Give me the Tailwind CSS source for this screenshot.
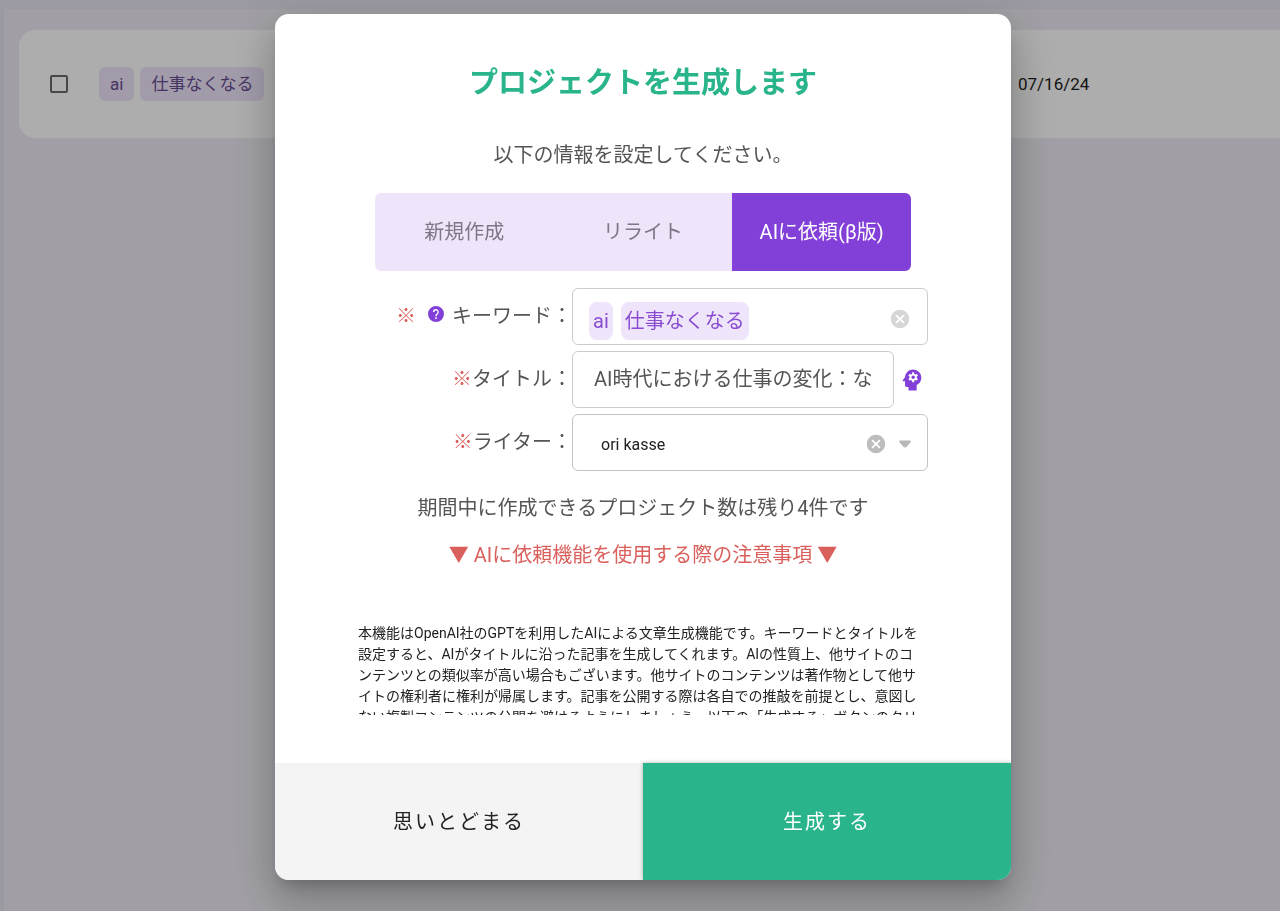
<!DOCTYPE html>
<html lang="ja">
<head>
  <meta charset="UTF-8">
  <meta name="viewport" content="width=device-width, initial-scale=1.0">
  <title>プロジェクトを生成します</title>
  <script src="https://cdn.jsdelivr.net/npm/@tailwindcss/browser@4"></script>
</head>
<body class="min-h-screen bg-[#e5e3ef] font-['Roboto','Noto_Sans_CJK_JP',sans-serif]">
  <!-- Project list -->
  <main class="min-h-screen pt-[9px] pl-1 overflow-hidden">
    <div class="min-h-screen bg-[#edebf3] pt-[21px] pl-[15px]">
      <div class="bg-white rounded-l-2xl">
        <table class="w-full text-[17px] leading-[26px] text-[#222]">
          <tbody>
            <tr class="h-[108px]">
              <td class="w-20 pl-[31px]">
                <input type="checkbox" aria-label="プロジェクトを選択" class="block appearance-none size-[18px] border-2 border-[#6b6b6b] rounded-xs">
              </td>
              <td>
                <div class="flex gap-1.5">
                  <span class="rounded-md bg-[#efe5fb] text-[#664c92] px-[11px] py-1">ai</span>
                  <span class="rounded-md bg-[#efe5fb] text-[#664c92] px-[11px] py-1">仕事なくなる</span>
                </div>
              </td>
              <td class="w-[262px]">07/16/24</td>
            </tr>
          </tbody>
        </table>
      </div>
    </div>
  </main>

  <!-- Modal -->
  <div class="fixed inset-0 bg-black/32 flex items-start justify-center pt-3.5 pl-1.5">
    <div role="dialog" aria-modal="true" aria-labelledby="dialogTitle" class="w-full max-w-[736px] bg-white rounded-[14px] overflow-hidden shadow-[0_11px_15px_-7px_rgba(0,0,0,0.2),0_24px_38px_3px_rgba(0,0,0,0.14),0_9px_46px_8px_rgba(0,0,0,0.12)]">
      <div class="px-[83px] pt-[49px] pb-12 text-xl leading-[30px] text-[#555]">
        <h1 id="dialogTitle" class="text-center text-[29px] leading-10 font-bold text-[#29b48c]">プロジェクトを生成します</h1>
        <p class="mt-[37px] text-center">以下の情報を設定してください。</p>

        <div class="mt-[23px] mx-[17px] grid grid-cols-3 h-[78px] rounded-md overflow-hidden bg-[#efe5fb] text-[#7d7786]">
          <button type="button">新規作成</button>
          <button type="button">リライト</button>
          <button type="button" class="bg-[#8340d9] text-white">AIに依頼(β版)</button>
        </div>

        <div class="mt-[17px] flex flex-col gap-1.5">
          <div class="flex">
            <div class="w-[214px] shrink-0 h-14 flex items-center justify-end">
              <span class="text-[#d9605c]">※</span>
              <button type="button" aria-label="ヘルプ" class="ml-2.5 mr-1.5 pb-1">
                <svg class="block size-5 text-[#8340d9]" viewBox="0 0 24 24" fill="currentColor"><path fill-rule="evenodd" d="M12,2.4A9.6,9.6 0 1,0 12,21.6A9.6,9.6 0 1,0 12,2.4ZM12,6A3.7,3.7 0 0,0 8.3,9.6H10.1A1.9,1.9 0 1,1 13.3,11L12.2,12.1Q11.1,13.1 11.1,14.6H12.9Q12.9,13.5 13.8,12.7L14.7,11.8A3.7,3.7 0 0,0 12,6ZM11.1,16V17.9H12.9V16Z"/></svg>
              </button>
              <label for="keyword">キーワード：</label>
            </div>
            <div class="flex-1 min-w-0 h-[57px] flex items-center gap-2 border border-[#ccc] rounded-md pl-4 pr-4 pt-2">
              <span class="rounded-lg bg-[#efe5fb] text-[#8a4cd0] px-1 py-1">ai</span>
              <span class="rounded-lg bg-[#efe5fb] text-[#8a4cd0] px-1 py-1">仕事なくなる</span>
              <input id="keyword" type="text" class="flex-1 min-w-0 outline-none">
              <button type="button" aria-label="キーワードをクリア" class="pb-1">
                <svg class="block size-[22px] text-[#d6d6d6]" viewBox="0 0 24 24" fill="currentColor"><path d="M12,2C17.53,2 22,6.47 22,12C22,17.53 17.53,22 12,22C6.47,22 2,17.53 2,12C2,6.47 6.47,2 12,2M15.59,7L12,10.59L8.41,7L7,8.41L10.59,12L7,15.59L8.41,17L12,13.41L15.59,17L17,15.59L13.41,12L17,8.41L15.59,7Z"/></svg>
              </button>
            </div>
          </div>

          <div class="flex">
            <label for="title" class="w-[214px] shrink-0 h-14 flex items-center justify-end"><span class="text-[#d9605c]">※</span>タイトル：</label>
            <input id="title" type="text" value="AI時代における仕事の変化：な" class="flex-1 min-w-0 h-[57px] border border-[#ccc] rounded-md pl-[21px] pr-4 pb-1 outline-none">
            <button type="button" aria-label="タイトルをAIで生成" class="ml-1 mr-0.5">
              <svg class="block size-7 text-[#8340d9]" viewBox="0 0 24 24" fill="currentColor"><path fill-rule="evenodd" d="M13 3C9.23 3 6.19 5.95 6 9.66L4.08 12.19C3.84 12.5 4.08 13 4.5 13H6V16C6 17.11 6.89 18 8 18H9V21H16V16.31C18.37 15.19 20 12.8 20 10C20 6.14 16.88 3 13 3ZM12.25 5.4H13.75L14.05 6.75L15 7.3L16.3 6.9L17.05 8.2L16.1 9.15V10.25L17.05 11.2L16.3 12.5L15 12.1L14.05 12.65L13.75 14H12.25L11.95 12.65L11 12.1L9.7 12.5L8.95 11.2L9.9 10.25V9.15L8.95 8.2L9.7 6.9L11 7.3L11.95 6.75ZM13 8.2A1.5 1.5 0 1 0 13 11.2A1.5 1.5 0 1 0 13 8.2Z"/></svg>
            </button>
          </div>

          <div class="flex">
            <label for="writer" class="w-[214px] shrink-0 h-14 flex items-center justify-end"><span class="text-[#d9605c]">※</span>ライター：</label>
            <div class="relative flex-1 min-w-0">
              <select id="writer" class="block appearance-none w-full h-[57px] border border-[#c4c4c4] rounded-md pl-7 pt-1 text-base text-[#222]">
                <option>ori kasse</option>
              </select>
              <div class="absolute inset-y-0 right-[11px] pt-0.5 flex items-center gap-1.5">
                <button type="button" aria-label="ライターをクリア">
                  <svg class="block size-[22px] text-[#bdbdbd]" viewBox="0 0 24 24" fill="currentColor"><path d="M12,2C17.53,2 22,6.47 22,12C22,17.53 17.53,22 12,22C6.47,22 2,17.53 2,12C2,6.47 6.47,2 12,2M15.59,7L12,10.59L8.41,7L7,8.41L10.59,12L7,15.59L8.41,17L12,13.41L15.59,17L17,15.59L13.41,12L17,8.41L15.59,7Z"/></svg>
                </button>
                <svg class="size-6 text-[#b8b8b8] pointer-events-none" viewBox="0 0 24 24" fill="currentColor"><path d="M6.6 8.6H17.4Q18.2 9.6 17.4 10.6L13.6 14.8Q12 16 10.4 14.8L6.6 10.6Q5.8 9.6 6.6 8.6Z"/></svg>
              </div>
            </div>
          </div>
        </div>

        <p class="mt-[22px] text-center">期間中に作成できるプロジェクト数は残り4件です</p>
        <p class="mt-[17px] text-center text-[#d9605c]">▼ AIに依頼機能を使用する際の注意事項 ▼</p>

        <div class="mt-[53px] h-[92px] overflow-hidden text-sm leading-[21px] text-[#222]">
          本機能はOpenAI社のGPTを利用したAIによる文章生成機能です。キーワードとタイトルを<br>
          設定すると、AIがタイトルに沿った記事を生成してくれます。AIの性質上、他サイトのコ<br>
          ンテンツとの類似率が高い場合もございます。他サイトのコンテンツは著作物として他サ<br>
          イトの権利者に権利が帰属します。記事を公開する際は各自での推敲を前提とし、意図し<br>
          ない複製コンテンツの公開を避けるようにしましょう。以下の「生成する」ボタンのクリ<br>
          ックをもって、上記に同意したものとみなします。
        </div>
      </div>

      <div class="grid grid-cols-2 h-[117px] text-xl tracking-widest">
        <button type="button" class="bg-[#f4f4f5] text-[#222]">思いとどまる</button>
        <button type="button" class="bg-[#29b48c] text-white shadow-[0_0_4px_rgba(0,0,0,0.3)]">生成する</button>
      </div>
    </div>
  </div>
</body>
</html>
